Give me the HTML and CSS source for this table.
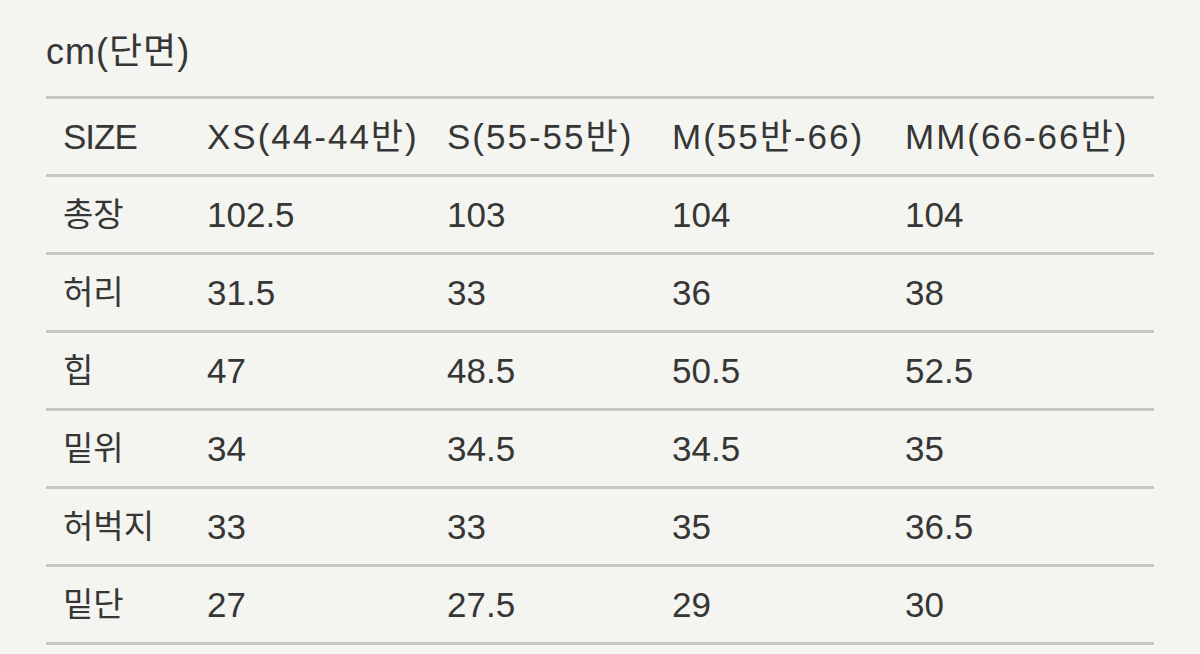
FILE: index.html
```html
<!DOCTYPE html>
<html lang="ko">
<head>
<meta charset="utf-8">
<title>cm(단면)</title>
<link rel="stylesheet" href="styles.css">
</head>
<body>
<main class="page">
  <h1 class="title">cm(단면)</h1>
  <table class="size-table">
    <colgroup>
      <col class="c1"><col class="c2"><col class="c3"><col class="c4"><col class="c5">
    </colgroup>
    <tbody>
      <tr class="head"><td>SIZE</td><td>XS(44-44반)</td><td>S(55-55반)</td><td>M(55반-66)</td><td>MM(66-66반)</td></tr>
      <tr><td>총장</td><td>102.5</td><td>103</td><td>104</td><td>104</td></tr>
      <tr><td>허리</td><td>31.5</td><td>33</td><td>36</td><td>38</td></tr>
      <tr><td>힙</td><td>47</td><td>48.5</td><td>50.5</td><td>52.5</td></tr>
      <tr><td>밑위</td><td>34</td><td>34.5</td><td>34.5</td><td>35</td></tr>
      <tr><td>허벅지</td><td>33</td><td>33</td><td>35</td><td>36.5</td></tr>
      <tr><td>밑단</td><td>27</td><td>27.5</td><td>29</td><td>30</td></tr>
    </tbody>
  </table>
</main>
</body>
</html>
```
FILE: styles.css
```css
html, body {
  margin: 0;
  padding: 0;
  background: #f4f4f0;
}
body {
  width: 1200px;
  height: 654px;
  overflow: hidden;
  font-family: "Liberation Sans", "Noto Sans CJK KR", sans-serif;
  color: #363636;
}
.page {
  padding: 30px 46px 0 46px;
}
.title {
  margin: 0 0 22px 0;
  font-size: 36px;
  font-weight: normal;
  line-height: 44px;
  height: 44px;
  letter-spacing: 1px;
}
.size-table {
  width: 1108px;
  border-collapse: collapse;
  table-layout: fixed;
  font-size: 35px;
}
.c1 { width: 144px; }
.c2 { width: 240px; }
.c3 { width: 225px; }
.c4 { width: 233px; }
.c5 { width: 266px; }
.size-table tr {
  border-top: 3px solid #c6c6c2;
  border-bottom: 3px solid #c6c6c2;
}
.size-table td {
  height: 75px;
  padding: 0 0 0 17px;
  vertical-align: middle;
  line-height: 40px;
  white-space: nowrap;
}
.size-table td:first-child {
  font-size: 33px;
}
.size-table .head td {
  letter-spacing: 2px;
}
.size-table .head td:first-child {
  font-size: 35px;
  letter-spacing: -1px;
}
```
